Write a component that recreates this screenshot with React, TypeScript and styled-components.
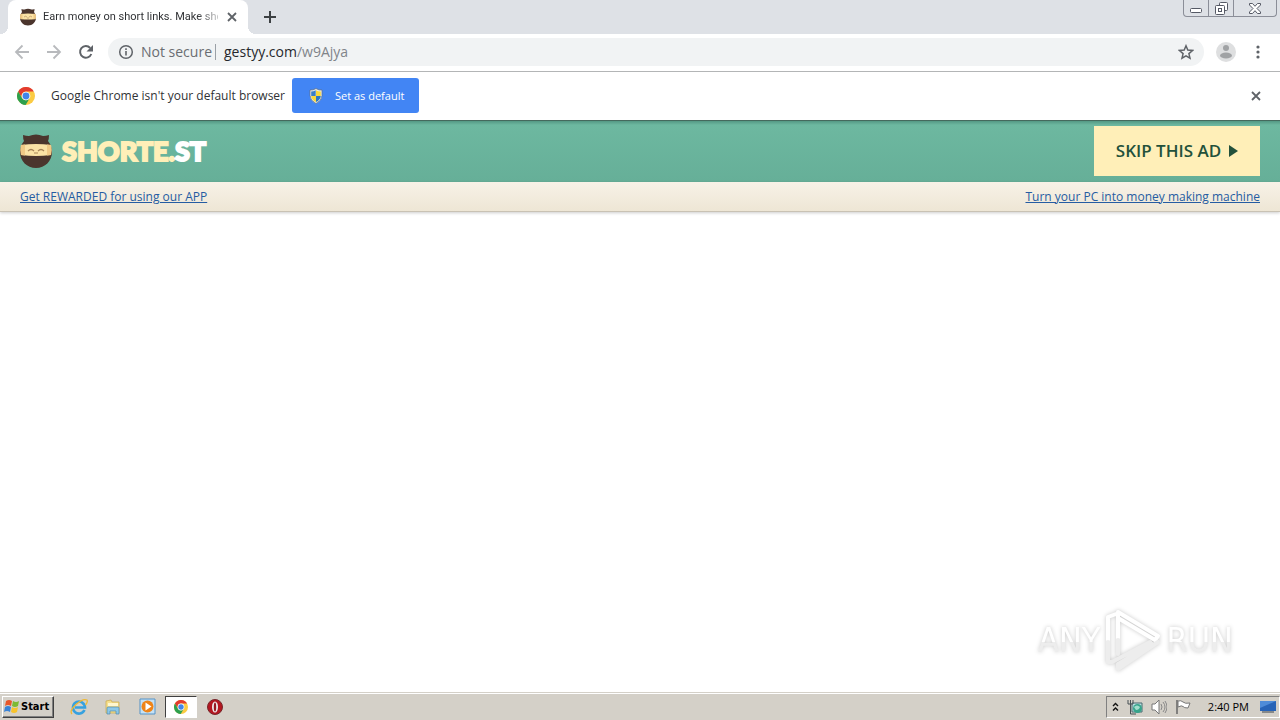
import React from 'react';
import styled, { createGlobalStyle } from 'styled-components';

const GlobalStyle = createGlobalStyle`
  * { box-sizing: border-box; }
  body { margin: 0; background: #fff; font-family: "Open Sans", "Noto Sans", sans-serif; }
  button, input { font-family: inherit; }
  svg { display: block; flex: none; }
`;

const Desktop = styled.div`
  display: flex;
  flex-direction: column;
  min-height: 100vh;
`;

const TabStrip = styled.header`
  display: flex;
  align-items: flex-start;
  height: 34px;
  padding-left: 8px;
  background: #dee1e6;
  overflow: hidden;
`;

const Tab = styled.div`
  position: relative;
  display: flex;
  align-items: center;
  width: 240px;
  height: 34px;
  padding: 0 9px 0 12px;
  gap: 7px;
  background: #fff;
  border-radius: 8px 8px 0 0;
  &::before, &::after {
    content: "";
    position: absolute;
    bottom: 0;
    width: 8px;
    height: 8px;
  }
  &::before {
    right: 100%;
    background: radial-gradient(circle at 0 0, #dee1e6 8px, #fff 8px);
  }
  &::after {
    left: 100%;
    background: radial-gradient(circle at 100% 0, #dee1e6 8px, #fff 8px);
  }
`;

const TabTitle = styled.span`
  flex: 1;
  min-width: 0;
  white-space: nowrap;
  font-family: Roboto, sans-serif;
  font-size: 11px;
  line-height: 16px;
  color: #303235;
  mask-image: linear-gradient(to right, #000 88%, transparent 104%);
`;

const IconButton = styled.button<{ $size?: number }>`
  display: flex;
  align-items: center;
  justify-content: center;
  flex: none;
  width: ${p => p.$size ?? 16}px;
  height: ${p => p.$size ?? 16}px;
  padding: 0;
  border: 0;
  background: none;
`;

const NewTab = styled(IconButton)`
  margin: 9px 0 0 14px;
`;

const WindowControls = styled.div`
  display: flex;
  height: 17px;
  margin: 0 3px 0 auto;
  border: 1px solid #8b8e98;
  border-top: 0;
  border-radius: 0 0 4px 4px;
`;

const WindowButton = styled.button<{ $width: number }>`
  display: flex;
  align-items: center;
  justify-content: center;
  width: ${p => p.$width}px;
  padding: 0;
  border: 0;
  background: none;
  & + & { border-left: 1px solid #8b8e98; }
`;

const Toolbar = styled.nav`
  display: flex;
  align-items: center;
  height: 38px;
  padding: 0 12px 1px 14px;
  border-bottom: 1px solid #b3b5b6;
  background: #fff;
`;

const NavButtons = styled.div`
  display: flex;
  gap: 16px;
  margin-right: 14px;
`;

const Omnibox = styled.div`
  display: flex;
  align-items: center;
  flex: 1;
  height: 28px;
  padding: 0 10px;
  border-radius: 14px;
  background: #f1f3f4;
  font-size: 14px;
  line-height: 20px;
`;

const Security = styled.span`
  margin-left: 7px;
  padding-right: 3px;
  color: #6a6d72;
`;

const Divider = styled.span`
  width: 1px;
  height: 16px;
  margin-right: 8px;
  background: #9aa0a6;
`;

const Address = styled.span`
  flex: 1;
  color: #26282c;
  span { color: #80848a; }
`;

const ToolbarEnd = styled.div`
  display: flex;
  gap: 12px;
  margin-left: 12px;
`;

const InfoBar = styled.section`
  display: flex;
  align-items: center;
  height: 48px;
  padding: 0 16px 1px 17px;
  background: #fff;
`;

const InfoText = styled.p`
  margin: 0 7px 0 16px;
  font-size: 12px;
  line-height: 16px;
  color: #303235;
`;

const DefaultButton = styled.button`
  display: flex;
  align-items: center;
  width: 127px;
  height: 35px;
  padding: 0 0 0 16px;
  gap: 11px;
  border: 0;
  border-radius: 3px;
  background: #4285f4;
  color: #fff;
  font-size: 11px;
  line-height: 16px;
`;

const Dismiss = styled(IconButton)`
  margin-left: auto;
`;

const AdHeader = styled.div`
  display: flex;
  align-items: center;
  justify-content: space-between;
  height: 62px;
  padding: 0 20px 1px;
  border-top: 1px solid #45695d;
  background: linear-gradient(#549884 0, #6db8a0 4px, #66af98 100%);
`;

const Brand = styled.a`
  display: flex;
  align-items: center;
  gap: 10px;
  text-decoration: none;
`;

const BrandName = styled.span`
  font-family: Lato, sans-serif;
  font-size: 27px;
  font-weight: 900;
  line-height: 28px;
  color: #ffefb8;
  -webkit-text-stroke: 2px #ffefb8;
  span { color: #fff; -webkit-text-stroke-color: #fff; }
`;

const SkipButton = styled.button`
  display: flex;
  align-items: center;
  justify-content: center;
  gap: 8px;
  width: 166px;
  height: 50px;
  padding: 0;
  border: 0;
  background: #ffefb8;
  color: #23513b;
  font-size: 17px;
  font-weight: 600;
  line-height: 24px;
`;

const LinkBar = styled.div`
  display: flex;
  align-items: center;
  justify-content: space-between;
  height: 30px;
  padding: 0 20px;
  border-bottom: 1px solid #c9c2b4;
  background: linear-gradient(#f7f2e7, #eee6d5);
  box-shadow: 0 1px 3px rgba(0, 0, 0, 0.2);
`;

const BarLink = styled.a`
  color: #255ca2;
  font-size: 12px;
  line-height: 16px;
  text-decoration: underline;
`;

const Page = styled.main`
  display: flex;
  flex: 1;
  align-items: flex-end;
  justify-content: flex-end;
  padding: 0 47px 20px;
`;

const Watermark = styled.div`
  display: flex;
  align-items: center;
  gap: 4px;
  filter: drop-shadow(0 0 2px rgba(0, 0, 0, 0.22));
`;

const WatermarkWord = styled.span`
  font-family: "DejaVu Sans Condensed", sans-serif;
  font-size: 34px;
  line-height: 56px;
  background: linear-gradient(#fff 54%, #ededed 54%);
  background-clip: text;
  color: transparent;
`;

const Taskbar = styled.footer`
  display: flex;
  align-items: center;
  height: 28px;
  padding: 1px 0 1px 2px;
  border-top: 1px solid #d4d0c8;
  box-shadow: inset 0 1px #fff;
  background: #d4d0c8;
`;

const StartButton = styled.button`
  display: flex;
  align-items: center;
  gap: 1px;
  width: 52px;
  height: 22px;
  padding: 0 0 0 1px;
  border: 1px solid;
  border-color: #fff #404040 #404040 #fff;
  box-shadow: inset -1px -1px #808080;
  background: #d4d0c8;
  color: #000;
  font-family: "DejaVu Sans Condensed", sans-serif;
  font-size: 11px;
  font-weight: 700;
  line-height: 16px;
`;

const Launchers = styled.div`
  display: flex;
  margin-left: 9px;
  gap: 2px;
`;

const Launcher = styled.button<{ $active?: boolean }>`
  display: flex;
  align-items: center;
  justify-content: center;
  width: 32px;
  height: 22px;
  padding: 0;
  border: 1px solid;
  border-color: ${p => (p.$active ? '#404040 #fff #fff #404040' : 'transparent')};
  background: ${p => (p.$active ? '#fff' : 'none')};
`;

const Tray = styled.div`
  display: flex;
  align-items: center;
  height: 22px;
  margin-left: auto;
  padding: 0 3px 0 5px;
  gap: 8px;
  border: 1px solid;
  border-color: #808080 #fff #fff #808080;
`;

const Clock = styled.time`
  margin: 0 3px 0 9px;
  color: #000;
  font-size: 11px;
  line-height: 16px;
`;

const Ninja = ({ size }: { size: number }) => (
  <svg width={size} height={size + 2} viewBox="0 0 32 34" aria-hidden="true">
    <path d="M3 1q3 1 6 1 7-3 14 0 3 0 6-1 0 4-1 6 4 5 4 11c0 9-7 16-16 16S0 27 0 18Q0 12 4 7 3 5 3 1z" fill="#4b352d" />
    <path d="M1 11q15-2 30 0 1 5 0 10-15 2-30 0-1-5 0-10z" fill="#fbe2a5" />
    <path d="M1 11l4-.5v11L1 21q-1-5 0-10zM27 10.500l4 .5q1 5 0 10l-4 .5z" fill="#f0c986" />
    <path d="M8 17q3-3 6 0M18 17q3-3 6 0M14 19h4" fill="none" stroke="#a78358" strokeWidth="1.2" />
  </svg>
);

const ChromeLogo = ({ size }: { size: number }) => (
  <svg width={size} height={size} viewBox="0 0 24 24" aria-hidden="true">
    <circle cx="12" cy="12" r="12" fill="#fbcb43" />
    <path d="M1.6 6A12 12 0 0 1 22.4 6H12a6 6 0 0 0-5.4 8.600z" fill="#e33b2e" />
    <path d="M1.6 6A12 12 0 0 0 11.500 24l5.400-9A6 6 0 0 1 6.800 15z" fill="#2da04e" />
    <circle cx="12" cy="12" r="5.800" fill="#fff" />
    <circle cx="12" cy="12" r="4.600" fill="#4285e8" />
  </svg>
);

const Shield = () => (
  <svg width="16" height="16" viewBox="0 0 16 16" aria-hidden="true">
    <path d="M8 .5q3 2 6 1.500v5.500q0 5-6 8-6-3-6-8V2q3 .5 6-1.500z" fill="#e8ecee" stroke="#626f7b" strokeWidth=".7" />
    <path d="M7.700 2.200V8H3.200V3.400q2.500 0 4.500-1.200z" fill="#397ec7" />
    <path d="M8 2.200q2 1.200 4.800 1.200V8H8zM3.200 8H8v6Q3.500 12 3.200 8z" fill="#f8d83c" />
    <path d="M8 8h4.800q-.5 4-4.800 6z" fill="#2d77c1" />
  </svg>
);

const Cross = ({ color = '#5f6368' }: { color?: string }) => (
  <svg width="10" height="10" viewBox="0 0 10 10" aria-hidden="true">
    <path d="M1 1l8 8M9 1L1 9" stroke={color} strokeWidth="1.800" />
  </svg>
);

const PlayMark = () => (
  <svg width="58" height="64" viewBox="0 0 58 64" aria-hidden="true">
    <g fill="none" strokeWidth="4" strokeLinejoin="round" strokeLinecap="round">
      <path d="M12 6L4 9v23M14 30V4l40 24-3 4-37-22" stroke="#fff" />
      <path d="M4 34v20h4l38-20M14 32v14M14 61l40-27M14 61v-5l34-20" stroke="#ededed" />
    </g>
  </svg>
);

export default function App() {
  return (
    <Desktop>
      <GlobalStyle />
      <TabStrip>
        <Tab>
          <Ninja size={16} />
          <TabTitle>Earn money on short links. Make sho</TabTitle>
          <IconButton aria-label="Close tab" $size={14}><Cross /></IconButton>
        </Tab>
        <NewTab aria-label="New tab">
          <svg width="12" height="12" viewBox="0 0 12 12"><path d="M6 0v12M0 6h12" stroke="#3c4043" strokeWidth="2" /></svg>
        </NewTab>
        <WindowControls>
          <WindowButton $width={24} aria-label="Minimize">
            <svg width="12" height="13" viewBox="0 0 12 13"><rect x=".5" y="6.500" width="11" height="4" rx="1" fill="#fff" stroke="#555965" /></svg>
          </WindowButton>
          <WindowButton $width={25} aria-label="Restore">
            <svg width="13" height="13" viewBox="0 0 13 13"><g fill="#fff" stroke="#555965"><rect x="4.500" y=".5" width="8" height="8" rx="1" /><rect x=".5" y="3.500" width="9" height="9" rx="1" /><rect x="3.500" y="6.500" width="3" height="3" /></g></svg>
          </WindowButton>
          <WindowButton $width={43} aria-label="Close">
            <svg width="12" height="11" viewBox="0 0 12 11"><path d="M.5.5h3L6 3.300 8.500.5h3v1.500L8 5.500l3.500 3.500v1.500h-3L6 7.700 3.500 10.500h-3V9L4 5.500.5 2z" fill="#fff" stroke="#555965" /></svg>
          </WindowButton>
        </WindowControls>
      </TabStrip>

      <Toolbar aria-label="Browser">
        <NavButtons>
          <IconButton aria-label="Back">
            <svg width="16" height="16" viewBox="0 0 16 16"><path d="M15 8H2M8.500 1.500L2 8l6.500 6.500" fill="none" stroke="#b8babd" strokeWidth="1.800" /></svg>
          </IconButton>
          <IconButton aria-label="Forward">
            <svg width="16" height="16" viewBox="0 0 16 16"><path d="M1 8h13M7.500 1.500L14 8l-6.500 6.500" fill="none" stroke="#b8babd" strokeWidth="1.800" /></svg>
          </IconButton>
          <IconButton aria-label="Reload">
            <svg width="16" height="16" viewBox="0 0 16 16"><path d="M13.300 10A5.800 5.800 0 1 1 12.200 4" fill="none" stroke="#5f6368" strokeWidth="2" /><path d="M15 1v6.500H8.500z" fill="#5f6368" /></svg>
          </IconButton>
        </NavButtons>
        <Omnibox>
          <svg width="16" height="16" viewBox="0 0 16 16"><circle cx="8" cy="8" r="6.300" fill="none" stroke="#5f6368" strokeWidth="1.500" /><path d="M8 7v4.500M8 4.300v1.700" stroke="#5f6368" strokeWidth="1.600" /></svg>
          <Security>Not secure</Security>
          <Divider />
          <Address>gestyy.com<span>/w9Ajya</span></Address>
          <IconButton aria-label="Bookmark">
            <svg width="16" height="16" viewBox="0 0 16 16"><path d="M8 1.800l1.800 4.300 4.700.4-3.600 3.100 1.100 4.600L8 11.800l-4 2.400 1.100-4.600L1.500 6.500l4.700-.4z" fill="none" stroke="#5f6368" strokeWidth="1.500" /></svg>
          </IconButton>
        </Omnibox>
        <ToolbarEnd>
          <IconButton aria-label="Profile" $size={20}>
            <svg width="20" height="20" viewBox="0 0 20 20"><circle cx="10" cy="10" r="10" fill="#dedfe0" /><circle cx="10" cy="6" r="3" fill="#a0a2a4" /><ellipse cx="10" cy="13.500" rx="6" ry="3" fill="#a0a2a4" /></svg>
          </IconButton>
          <IconButton aria-label="Menu" $size={20}>
            <svg width="4" height="14" viewBox="0 0 4 14"><g fill="#5f6368"><circle cx="2" cy="2" r="1.600" /><circle cx="2" cy="7" r="1.600" /><circle cx="2" cy="12" r="1.600" /></g></svg>
          </IconButton>
        </ToolbarEnd>
      </Toolbar>

      <InfoBar>
        <ChromeLogo size={18} />
        <InfoText>Google Chrome isn't your default browser</InfoText>
        <DefaultButton><Shield />Set as default</DefaultButton>
        <Dismiss aria-label="Dismiss"><Cross /></Dismiss>
      </InfoBar>

      <AdHeader>
        <Brand href="#">
          <Ninja size={32} />
          <BrandName>SHORTE.<span>ST</span></BrandName>
        </Brand>
        <SkipButton>
          SKIP THIS AD
          <svg width="9" height="12" viewBox="0 0 9 12"><path d="M0 0l9 6-9 6z" fill="#23513b" /></svg>
        </SkipButton>
      </AdHeader>
      <LinkBar>
        <BarLink href="#">Get REWARDED for using our APP</BarLink>
        <BarLink href="#">Turn your PC into money making machine</BarLink>
      </LinkBar>

      <Page>
        <Watermark>
          <WatermarkWord>ANY</WatermarkWord>
          <PlayMark />
          <WatermarkWord>RUN</WatermarkWord>
        </Watermark>
      </Page>

      <Taskbar>
        <StartButton>
          <svg width="16" height="16" viewBox="0 0 16 16">
            <path d="M2 2q3-2 6 0L7 7Q4 5 1 7z" fill="#e8572a" />
            <path d="M9 2q3 2 6 0l-1 5q-3 2-6 0z" fill="#7dba32" />
            <path d="M1 8q3-2 6 0l-1 5q-3-2-6 0z" fill="#3a83d6" />
            <path d="M8 8q3 2 6 0l-1 5q-3 2-6 0z" fill="#f8c32b" />
          </svg>
          Start
        </StartButton>
        <Launchers>
          <Launcher aria-label="Internet Explorer">
            <svg width="18" height="18" viewBox="0 0 18 18"><path d="M14.500 12A6 6 0 1 1 15 9.500H5" fill="none" stroke="#36a1df" strokeWidth="2.600" /><path d="M2 16Q-1 13 6 6.500T17 2q1 2-1.500 5" fill="none" stroke="#efb832" strokeWidth="1.300" /></svg>
          </Launcher>
          <Launcher aria-label="File Explorer">
            <svg width="16" height="16" viewBox="0 0 16 16"><path d="M1 2l5-1 1 2h7v11H1z" fill="#f6df8c" stroke="#c9a94c" strokeWidth=".7" /><path d="M3 4h10v3H3z" fill="#fff7cf" /><path d="M2 15V9q0-1 1-1h10q1 0 1 1v6h-3v-3H5v3z" fill="#8cc8e8" stroke="#5289ad" strokeWidth=".7" /></svg>
          </Launcher>
          <Launcher aria-label="Media Player">
            <svg width="17" height="17" viewBox="0 0 17 17"><path d="M1 1h15v15H1z" fill="#c5e1f5" stroke="#5593c7" /><circle cx="8.500" cy="8.500" r="6" fill="#ef8418" /><path d="M6.500 4.500l6 4-6 4z" fill="#fff" /></svg>
          </Launcher>
          <Launcher $active aria-label="Chrome"><ChromeLogo size={14} /></Launcher>
          <Launcher aria-label="Opera">
            <svg width="16" height="16" viewBox="0 0 16 16"><circle cx="8" cy="8" r="7.500" fill="#b41620" stroke="#76272a" /><ellipse cx="8" cy="8" rx="3" ry="5.500" fill="#eee" /><ellipse cx="8" cy="8" rx="1.200" ry="4.500" fill="#961820" /></svg>
          </Launcher>
        </Launchers>
        <Tray>
          <svg width="7" height="10" viewBox="0 0 7 10"><path d="M1 4l2.500-2.500L6 4M1 8.500L3.500 6 6 8.500" fill="none" stroke="#111" strokeWidth="1.400" /></svg>
          <svg width="16" height="16" viewBox="0 0 16 16"><path d="M5 4h10v9H5z" fill="#b9dde0" stroke="#486b71" /><path d="M1 1v4h5V1M3.500 1v14H9" fill="none" stroke="#485054" /><circle cx="10.500" cy="9.500" r="4.500" fill="#38a48b" /><path d="M7 8q3-3 6 0-1 3-4 3z" fill="#a2decd" /></svg>
          <svg width="16" height="16" viewBox="0 0 16 16"><path d="M1 5h3l4-4v14l-4-4H1z" fill="#fff" stroke="#777" /><path d="M10 5q2 3 0 6M12 3q4 5 0 10M14 2q4 6 0 12" fill="none" stroke="#888" /></svg>
          <svg width="16" height="16" viewBox="0 0 16 16"><path d="M2 1v14" stroke="#666" strokeWidth="1.500" /><path d="M3 2q3-1 5 1t7 1l-2 5q-4 0-5-1.500T3 8z" fill="#fff" stroke="#777" /></svg>
          <Clock>2:40 PM</Clock>
          <svg width="16" height="14" viewBox="0 0 16 14"><path d="M0 1h16v10H0z" fill="#2864b7" /><path d="M0 1h16L0 8z" fill="#4f8cd8" /><path d="M2 12h12" stroke="#38424d" /></svg>
        </Tray>
      </Taskbar>
    </Desktop>
  );
}
